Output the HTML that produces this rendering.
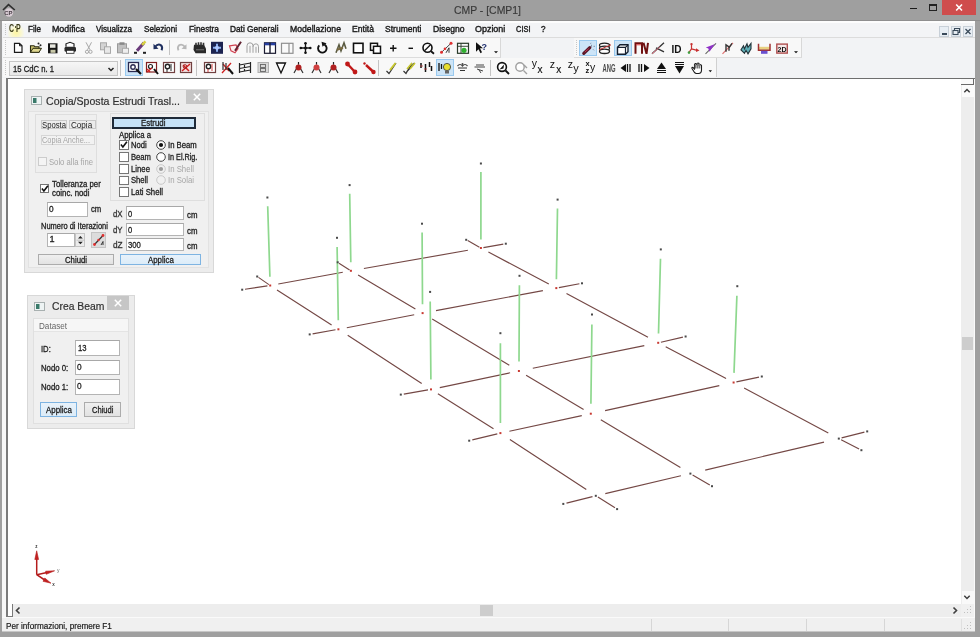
<!DOCTYPE html>
<html><head><meta charset="utf-8"><style>
#w{position:absolute;left:0;top:0;width:980px;height:637px;will-change:transform;overflow:hidden;}
html,body{margin:0;padding:0;}
body{width:980px;height:637px;position:relative;overflow:hidden;font-family:"Liberation Sans",sans-serif;background:#9f9f9f;}
.r{position:absolute;}
.t{position:absolute;white-space:nowrap;transform-origin:0 0;font-family:"Liberation Sans",sans-serif;}
</style></head><body><div id="w">
<div class="r" style="left:0px;top:0px;width:980px;height:637px;background:#9f9f9f"></div>
<svg class="r" style="left:1px;top:2px" width="16" height="16" viewBox="0 0 16 16">
<circle cx="8" cy="10.5" r="4.2" fill="#d8ccd4"/>
<path d="M2 8 L7.5 2.6 L13.8 8" fill="none" stroke="#2e2e2e" stroke-width="1.6"/>
<text x="3.2" y="13.2" font-size="6" font-family="Liberation Sans" font-weight="bold" fill="#4a4048">CP</text>
</svg>
<div class="t" style="left:454.00px;top:4.58px;font-size:11.01px;line-height:11.01px;color:#383838;font-weight:normal;transform:scaleX(0.9468);-webkit-text-stroke:0.15px #383838;">CMP - [CMP1]</div>
<div class="r" style="left:910px;top:7.8px;width:7px;height:1.6px;background:#1a1a1a"></div>
<div class="r" style="left:929px;top:4px;width:8px;height:7px;border:1.5px solid #222;box-sizing:border-box;border-top-width:2.5px"></div>
<div class="r" style="left:942px;top:0px;width:34px;height:15px;background:#cf4d4d"></div>
<svg class="r" style="left:953px;top:3px" width="12" height="10" viewBox="0 0 12 10">
<path d="M3.2 1.5 L9 7.5 M9 1.5 L3.2 7.5" stroke="#fff" stroke-width="1.6"/></svg>
<div class="r" style="left:2px;top:21px;width:973px;height:611px;background:#f0f0f0"></div>
<div class="r" style="left:2px;top:21px;width:973px;height:16px;background:#f3f4f6"></div>
<div class="r" style="left:2px;top:21px;width:973px;height:2px;background:#fdfdfd"></div>
<div class="r" style="left:0px;top:20px;width:980px;height:1px;background:#8f8f8f"></div>
<div class="r" style="left:3px;top:37px;width:972px;height:1px;background:#dcdcdc"></div>
<div class="r" style="left:5px;top:24px;width:1px;height:1px;background:#c4c4c4"></div>
<div class="r" style="left:5px;top:26px;width:1px;height:1px;background:#c4c4c4"></div>
<div class="r" style="left:5px;top:28px;width:1px;height:1px;background:#c4c4c4"></div>
<div class="r" style="left:5px;top:30px;width:1px;height:1px;background:#c4c4c4"></div>
<div class="r" style="left:5px;top:32px;width:1px;height:1px;background:#c4c4c4"></div>
<div class="r" style="left:5px;top:34px;width:1px;height:1px;background:#c4c4c4"></div>
<div class="r" style="left:8px;top:23px;width:16px;height:14px;background:radial-gradient(circle at 50% 70%, #fff6a0 0%, rgba(255,250,180,0.5) 45%, rgba(255,255,255,0) 70%)"></div>
<div class="t" style="left:8.80px;top:23.61px;font-size:10.14px;line-height:10.14px;color:#3c3c18;font-weight:bold;transform:scaleX(0.6927);">C P</div>
<div class="r" style="left:14.6px;top:25.5px;width:1.3px;height:2.5px;background:#5a5a30"></div>
<div class="t" style="left:28.00px;top:24.87px;font-size:9.13px;line-height:9.13px;color:#1a1a1a;font-weight:normal;transform:scaleX(0.8844);-webkit-text-stroke:0.4px #1a1a1a;">File</div>
<div class="t" style="left:52.00px;top:24.87px;font-size:9.13px;line-height:9.13px;color:#1a1a1a;font-weight:normal;transform:scaleX(0.9690);-webkit-text-stroke:0.4px #1a1a1a;">Modifica</div>
<div class="t" style="left:96.00px;top:24.87px;font-size:9.13px;line-height:9.13px;color:#1a1a1a;font-weight:normal;transform:scaleX(0.8781);-webkit-text-stroke:0.4px #1a1a1a;">Visualizza</div>
<div class="t" style="left:144.00px;top:24.87px;font-size:9.13px;line-height:9.13px;color:#1a1a1a;font-weight:normal;transform:scaleX(0.8902);-webkit-text-stroke:0.4px #1a1a1a;">Selezioni</div>
<div class="t" style="left:188.50px;top:24.87px;font-size:9.13px;line-height:9.13px;color:#1a1a1a;font-weight:normal;transform:scaleX(0.9089);-webkit-text-stroke:0.4px #1a1a1a;">Finestra</div>
<div class="t" style="left:230.00px;top:24.87px;font-size:9.13px;line-height:9.13px;color:#1a1a1a;font-weight:normal;transform:scaleX(0.9104);-webkit-text-stroke:0.4px #1a1a1a;">Dati Generali</div>
<div class="t" style="left:289.70px;top:24.87px;font-size:9.13px;line-height:9.13px;color:#1a1a1a;font-weight:normal;transform:scaleX(0.9475);-webkit-text-stroke:0.4px #1a1a1a;">Modellazione</div>
<div class="t" style="left:352.20px;top:24.87px;font-size:9.13px;line-height:9.13px;color:#1a1a1a;font-weight:normal;transform:scaleX(0.9412);-webkit-text-stroke:0.4px #1a1a1a;">Entità</div>
<div class="t" style="left:385.00px;top:24.87px;font-size:9.13px;line-height:9.13px;color:#1a1a1a;font-weight:normal;transform:scaleX(0.9340);-webkit-text-stroke:0.4px #1a1a1a;">Strumenti</div>
<div class="t" style="left:432.60px;top:24.87px;font-size:9.13px;line-height:9.13px;color:#1a1a1a;font-weight:normal;transform:scaleX(0.9401);-webkit-text-stroke:0.4px #1a1a1a;">Disegno</div>
<div class="t" style="left:475.20px;top:24.87px;font-size:9.13px;line-height:9.13px;color:#1a1a1a;font-weight:normal;transform:scaleX(0.9789);-webkit-text-stroke:0.4px #1a1a1a;">Opzioni</div>
<div class="t" style="left:516.00px;top:24.87px;font-size:9.13px;line-height:9.13px;color:#1a1a1a;font-weight:normal;transform:scaleX(0.8165);-webkit-text-stroke:0.4px #1a1a1a;">CISI</div>
<div class="t" style="left:541.00px;top:24.87px;font-size:9.13px;line-height:9.13px;color:#1a1a1a;font-weight:normal;transform:scaleX(0.8880);-webkit-text-stroke:0.4px #1a1a1a;">?</div>
<div class="r" style="left:939px;top:26px;width:10px;height:11px;background:#e8eef4;border:1px solid #c8d0d8;box-sizing:border-box"></div>
<div class="r" style="left:951px;top:26px;width:10px;height:11px;background:#e8eef4;border:1px solid #c8d0d8;box-sizing:border-box"></div>
<div class="r" style="left:963px;top:26px;width:10px;height:11px;background:#e8eef4;border:1px solid #c8d0d8;box-sizing:border-box"></div>
<div class="r" style="left:942px;top:33px;width:5px;height:1.5px;background:#3a4a5a"></div>
<svg class="r" style="left:951px;top:26px" width="10" height="11" viewBox="0 0 10 11">
<rect x="2" y="4.5" width="5" height="4" fill="none" stroke="#3a4a5a" stroke-width="1.1"/>
<path d="M3.5 4.5 V2.5 H8.5 V6.5 H7" fill="none" stroke="#3a4a5a" stroke-width="1.1"/></svg>
<svg class="r" style="left:963px;top:26px" width="10" height="11" viewBox="0 0 10 11">
<path d="M2.5 3 L7.5 8 M7.5 3 L2.5 8" stroke="#3a4a5a" stroke-width="1.3"/></svg>
<div class="r" style="left:2px;top:38px;width:973px;height:40px;background:#f2f3f5"></div>
<div class="r" style="left:3px;top:38px;width:497px;height:19px;background:#f8f8f8;border-right:1px solid #d8d8d8;border-bottom:1px solid #dcdcdc"></div>
<div class="r" style="left:574px;top:38px;width:227px;height:19px;background:#f8f8f8;border-right:1px solid #d8d8d8;border-bottom:1px solid #dcdcdc"></div>
<div class="r" style="left:3px;top:58px;width:713px;height:19px;background:#f8f8f8;border-right:1px solid #d0d0d0"></div>
<div class="r" style="left:5px;top:40px;width:1px;height:1px;background:#c6c6c6"></div>
<div class="r" style="left:5px;top:42px;width:1px;height:1px;background:#c6c6c6"></div>
<div class="r" style="left:5px;top:44px;width:1px;height:1px;background:#c6c6c6"></div>
<div class="r" style="left:5px;top:46px;width:1px;height:1px;background:#c6c6c6"></div>
<div class="r" style="left:5px;top:48px;width:1px;height:1px;background:#c6c6c6"></div>
<div class="r" style="left:5px;top:50px;width:1px;height:1px;background:#c6c6c6"></div>
<div class="r" style="left:5px;top:52px;width:1px;height:1px;background:#c6c6c6"></div>
<div class="r" style="left:5px;top:54px;width:1px;height:1px;background:#c6c6c6"></div>
<div class="r" style="left:576px;top:40px;width:1px;height:1px;background:#c6c6c6"></div>
<div class="r" style="left:576px;top:42px;width:1px;height:1px;background:#c6c6c6"></div>
<div class="r" style="left:576px;top:44px;width:1px;height:1px;background:#c6c6c6"></div>
<div class="r" style="left:576px;top:46px;width:1px;height:1px;background:#c6c6c6"></div>
<div class="r" style="left:576px;top:48px;width:1px;height:1px;background:#c6c6c6"></div>
<div class="r" style="left:576px;top:50px;width:1px;height:1px;background:#c6c6c6"></div>
<div class="r" style="left:576px;top:52px;width:1px;height:1px;background:#c6c6c6"></div>
<div class="r" style="left:576px;top:54px;width:1px;height:1px;background:#c6c6c6"></div>
<div class="r" style="left:5px;top:60px;width:1px;height:1px;background:#c6c6c6"></div>
<div class="r" style="left:5px;top:62px;width:1px;height:1px;background:#c6c6c6"></div>
<div class="r" style="left:5px;top:64px;width:1px;height:1px;background:#c6c6c6"></div>
<div class="r" style="left:5px;top:66px;width:1px;height:1px;background:#c6c6c6"></div>
<div class="r" style="left:5px;top:68px;width:1px;height:1px;background:#c6c6c6"></div>
<div class="r" style="left:5px;top:70px;width:1px;height:1px;background:#c6c6c6"></div>
<div class="r" style="left:5px;top:72px;width:1px;height:1px;background:#c6c6c6"></div>
<div class="r" style="left:5px;top:74px;width:1px;height:1px;background:#c6c6c6"></div>
<div class="r" style="left:578.5px;top:39.5px;width:18px;height:16.5px;background:#cce4f7;border:1px solid #99c9ef;box-sizing:border-box"></div>
<div class="r" style="left:614px;top:39.5px;width:18px;height:16.5px;background:#cce4f7;border:1px solid #99c9ef;box-sizing:border-box"></div>
<div class="r" style="left:124.5px;top:59px;width:18px;height:17px;background:#cce4f7;border:1px solid #99c9ef;box-sizing:border-box"></div>
<div class="r" style="left:436px;top:59px;width:17.5px;height:17px;background:#cce4f7;border:1px solid #99c9ef;box-sizing:border-box"></div>
<div class="r" style="left:169px;top:40px;width:1px;height:15px;background:#c4c4c4"></div>
<div class="r" style="left:120px;top:60px;width:1px;height:16px;background:#c4c4c4"></div>
<div class="r" style="left:196px;top:60px;width:1px;height:16px;background:#c4c4c4"></div>
<div class="r" style="left:378px;top:60px;width:1px;height:16px;background:#c4c4c4"></div>
<div class="r" style="left:490px;top:60px;width:1px;height:16px;background:#c4c4c4"></div>
<div class="r" style="left:9px;top:61px;width:109px;height:15px;background:linear-gradient(#f6f6f6,#e8e8e8);border:1px solid #c6c6c6;box-sizing:border-box"></div>
<div class="t" style="left:13.20px;top:63.78px;font-size:9.71px;line-height:9.71px;color:#1a1a1a;font-weight:normal;transform:scaleX(0.7915);-webkit-text-stroke:0.3px #1a1a1a;">15 CdC n. 1</div>
<svg class="r" style="left:0;top:0" width="980" height="80" viewBox="0 0 980 80"><g transform="translate(0,0.8)"><path d="M14.5 42.5 H19.5 L22 45 V51.5 H14.5 Z" fill="#fff" stroke="#1a1a1a" stroke-width="1.2"/><path d="M19.5 42.5 V45 H22" fill="none" stroke="#1a1a1a" stroke-width="1"/><path d="M30.5 51.5 V45 H34 L35 46 H39 V51.5 Z" fill="#c8c070" stroke="#2a2a10" stroke-width="1.1"/><path d="M30.5 51.5 L33 47.5 H41.5 L39 51.5 Z" fill="#e0d890" stroke="#2a2a10" stroke-width="1"/><circle cx="38.5" cy="42.8" r="1" fill="#222"/><circle cx="40.5" cy="44.5" r="1" fill="#222"/><rect x="48" y="42.5" width="9.5" height="10" fill="#151515"/><rect x="50" y="43.5" width="5.5" height="3.5" fill="#e8e8e0"/><rect x="50.5" y="49" width="5" height="3" fill="#c8c8a8"/><path d="M66 46 V43 L70 41.5 L74 43 V46" fill="#fff" stroke="#222" stroke-width="1.2"/><rect x="64.5" y="46" width="11.5" height="5" rx="1.5" fill="#2a2a2a"/><rect x="66.5" y="49.5" width="7.5" height="3" fill="#fff" stroke="#222" stroke-width="0.8"/><path d="M86 41.5 L90 49 M91.5 41.5 L87.5 49" stroke="#a8a8a8" stroke-width="1"/><circle cx="87" cy="51" r="1.6" fill="none" stroke="#a8a8a8"/><circle cx="90.5" cy="51" r="1.6" fill="none" stroke="#a8a8a8"/><rect x="100.5" y="42" width="6" height="7" fill="#d4d4d4" stroke="#a8a8a8"/><rect x="104.5" y="46" width="6" height="6.5" fill="#e8e8e8" stroke="#a8a8a8"/><rect x="117.5" y="43" width="9" height="9" fill="#c0c0c0" stroke="#9a9a9a"/><rect x="119.5" y="41.5" width="5" height="2.5" fill="#888"/><rect x="122.5" y="47.5" width="6" height="5" fill="#eee" stroke="#aaa"/><path d="M137 50 L144 42" stroke="#6a3a7a" stroke-width="3"/><path d="M142 44 L145.5 40.5" stroke="#d8d040" stroke-width="2.5"/><rect x="134" y="51" width="3" height="2" fill="#222"/><rect x="143" y="51" width="3" height="2" fill="#222"/><path d="M155 46 Q158 42.5 161 44.5 Q163 46.5 161.5 49.5" fill="none" stroke="#203060" stroke-width="2"/><path d="M153.5 43 L153.5 48.5 L158.5 48 Z" fill="#203060"/><path d="M185 46 Q182 42.5 179 44.5 Q177 46.5 178.5 49.5" fill="none" stroke="#b8b8b8" stroke-width="1.8"/><path d="M186.5 43.5 L186.5 48.5 L181.5 48 Z" fill="#b8b8b8"/><path d="M194 44 H204 L206 48 V52.5 H195.5 L193.5 49 Z" fill="#2a2a2a"/><path d="M196 42 V45 M198.5 41.5 V45 M201 41.5 V45 M203.5 42 V45" stroke="#333" stroke-width="1.6"/><path d="M196 49 H204" stroke="#888" stroke-width="0.8"/><rect x="211" y="41" width="12" height="12" fill="#1c2350"/><path d="M217 43 V51 M213 47 H221" stroke="#8ab0f0" stroke-width="2"/><circle cx="217" cy="47" r="2" fill="#b0c8ff"/><path d="M229.5 45 L236 44 L238 48 L235 52 L231 50 Z" fill="#fff0f0" stroke="#d04050" stroke-width="1.2"/><path d="M235 50 L241 41" stroke="#602030" stroke-width="2"/><path d="M247 52 V45 Q247 42 250 42 Q253 42 253 45 V52 M250 52 V45 M253 46 Q253 43 256 43 Q258.5 43 258.5 46 V52 M256 52 V46" fill="none" stroke="#a0a0a0" stroke-width="1"/><rect x="264.5" y="42" width="11" height="10.5" fill="#fff" stroke="#1a1a30" stroke-width="1.2"/><rect x="264.5" y="42" width="11" height="2.5" fill="#2840a0"/><path d="M270 42 V52.5" stroke="#1a1a30" stroke-width="1.4"/><rect x="281.5" y="42.5" width="11.5" height="10" fill="#fafafa" stroke="#909090" stroke-width="1.2"/><path d="M289 42.5 V52.5" stroke="#909090" stroke-width="1.2"/><path d="M305.5 42.5 V52 M300.8 47.2 H310.3" stroke="#111" stroke-width="1.3"/><circle cx="305.5" cy="47.2" r="1.5" fill="#111"/><circle cx="305.5" cy="42.5" r="1.3" fill="#111"/><circle cx="305.5" cy="52" r="1.3" fill="#111"/><circle cx="300.8" cy="47.2" r="1.3" fill="#111"/><circle cx="310.3" cy="47.2" r="1.3" fill="#111"/><path d="M324.5 43.8 A4.3 4.3 0 1 1 319.3 44.5" fill="none" stroke="#111" stroke-width="1.9"/><path d="M321.5 41 L326.5 42.5 L322.5 46 Z" fill="#111"/><path d="M336 52 L339 44 L341 50 L344 42 L346 48" fill="none" stroke="#5a5a40" stroke-width="1.6"/><path d="M337 49 L343 47" stroke="#7a6a40" stroke-width="2"/><rect x="353.5" y="42.5" width="9.5" height="9.5" fill="#fff" stroke="#111" stroke-width="1.6"/><rect x="370.5" y="42.5" width="7" height="7" fill="#fff" stroke="#111" stroke-width="1.5"/><rect x="373.5" y="45.5" width="7" height="7" fill="#fff" stroke="#111" stroke-width="1.5"/><path d="M390 47.5 H396.5 M393.2 44.2 V50.8" stroke="#111" stroke-width="1.4"/><path d="M408.5 47.5 H413" stroke="#111" stroke-width="1.4"/><circle cx="427.5" cy="47" r="4.5" fill="#fff" stroke="#111" stroke-width="1.6"/><path d="M424.5 50 L430.5 44" stroke="#111" stroke-width="1.3"/><path d="M431 50.5 L434 53" stroke="#111" stroke-width="1.8"/><path d="M441.5 51.5 L451 42.5" stroke="#444" stroke-width="1"/><circle cx="441.5" cy="51.5" r="1.5" fill="#e03030"/><circle cx="445" cy="48" r="1.3" fill="#e03030"/><circle cx="451" cy="42.5" r="1.5" fill="#e03030"/><path d="M446 52 L449 47 L449 52" fill="none" stroke="#333" stroke-width="1"/><rect x="457.5" y="42.5" width="11" height="10" fill="#fafafa" stroke="#2a3a2a" stroke-width="1.2"/><path d="M457.5 45.5 H468.5 M461 42.5 V52.5" stroke="#2a3a2a" stroke-width="0.9"/><circle cx="464" cy="49.5" r="2.6" fill="#30b030"/><path d="M476 41.5 V51 L478.5 48.5 L480.5 52.5 L482 51.5 L480 47.5 L483 47.5 Z" fill="#111"/><text x="481.5" y="49" font-size="9" font-weight="bold" font-family="Liberation Sans" fill="#203070">?</text><path d="M494 50.5 H498 L496 52.5 Z" fill="#111"/><path d="M583.8 52.5 L589.8 46.8" stroke="#5a1828" stroke-width="3.2" stroke-linecap="round"/><path d="M584.8 51.3 L588.8 47.8" stroke="#c03050" stroke-width="1"/><path d="M591.5 44 V46 M593.5 45.5 H595 M593 48.5 L594 49.5 M590.5 43 L591 42" stroke="#7a8aa0" stroke-width="0.9"/><ellipse cx="604.5" cy="44.5" rx="5" ry="2.2" fill="#fff" stroke="#222" stroke-width="1.3"/><ellipse cx="604.5" cy="47.5" rx="5" ry="2.2" fill="#fff" stroke="#222" stroke-width="1.3"/><ellipse cx="604.5" cy="50.5" rx="5" ry="2.2" fill="#fff" stroke="#222" stroke-width="1.3"/><path d="M599 49 L611 44" stroke="#c03030" stroke-width="1"/><path d="M617.5 46.5 L620 44 H628 V51 L625.5 53.5 H617.5 Z" fill="#fff" stroke="#152030" stroke-width="1.4"/><path d="M617.5 46.5 H625.5 V53.5 M625.5 46.5 L628 44" fill="none" stroke="#152030" stroke-width="1.2"/><path d="M635.5 53 V42.5 H642 V53 M643.5 42 L646.5 53 L648 42" fill="none" stroke="#701010" stroke-width="2"/><path d="M636 44 H641" stroke="#e04040" stroke-width="1"/><path d="M652 53 L664 42 M656 47 L664 51" stroke="#333" stroke-width="1.3"/><path d="M652 53 L660 46" stroke="#e07080" stroke-width="1"/><text x="671.5" y="51.8" font-size="10" font-weight="bold" font-family="Liberation Sans" fill="#111">ID</text><path d="M691.5 48 L697 49.5 M691.5 48 L691.5 43.5 M691.5 48 L689 51.5" stroke="#c83030" stroke-width="1.2"/><circle cx="691.5" cy="43.3" r="1.2" fill="#c83030"/><circle cx="689" cy="51.8" r="1.3" fill="#40a040"/><path d="M696 47.5 L699.5 49.7 L696 51.2 Z" fill="#c83030"/><path d="M705.5 53 L716 42.5" stroke="#666" stroke-width="1.1"/><path d="M714.5 43.5 L709.5 51 L708.3 47.8 L705.8 46.8 Z" fill="#9030c8"/><path d="M722.5 53 L733 42" stroke="#e07070" stroke-width="1.2"/><path d="M726 51 V44 L729 46 V50 M729 47 L732 42.5" fill="none" stroke="#333" stroke-width="1.4"/><path d="M741 49 L743.5 45 L744.5 48 L747 43 L748 46.5 L751 42.5 V48 L748 53 L746 49.5 L744.5 52.5 Z" fill="#60b0b8" stroke="#22333a" stroke-width="1.1"/><rect x="758.5" y="46" width="11.5" height="3" fill="#e8d080"/><path d="M758.5 43 V49.5 H770 V43" fill="none" stroke="#a03030" stroke-width="1.5"/><rect x="761" y="50" width="6.5" height="3" fill="#6a50d0"/><rect x="776.8" y="43.3" width="10.5" height="9" fill="#f6e8e8" stroke="#b05050" stroke-width="1.4"/><text x="777.6" y="50.8" font-size="7.5" font-weight="bold" font-family="Liberation Sans" fill="#111" textLength="9" lengthAdjust="spacingAndGlyphs">2D</text><path d="M794 50.5 H798 L796 52.5 Z" fill="#111"/></g><path d="M108.5 68 L111 70.5 L113.5 68" fill="none" stroke="#222" stroke-width="1.5"/><rect x="128.5" y="62.5" width="10" height="9" fill="#fff" stroke="#2a2a50" stroke-width="1.3"/><circle cx="133" cy="67" r="2.2" fill="none" stroke="#2a2a50" stroke-width="1.4"/><path d="M136 69 L141 74" stroke="#111" stroke-width="2.2"/><rect x="146.5" y="62.5" width="10" height="9.5" fill="#fff" stroke="#802020" stroke-width="1.2"/><circle cx="150.5" cy="66.5" r="2" fill="none" stroke="#222" stroke-width="1.2"/><path d="M147 72 L152 68 M150 72 L147 69" stroke="#d02020" stroke-width="1.3"/><path d="M154 69 L158 74" stroke="#111" stroke-width="2"/><rect x="163.5" y="62.5" width="11" height="10" fill="#fff" stroke="#704040" stroke-width="1.2"/><circle cx="167.5" cy="66.5" r="2.2" fill="none" stroke="#222" stroke-width="1.4"/><path d="M167 72 V69 M171 64 V71" stroke="#222" stroke-width="1"/><rect x="180.5" y="62.5" width="11" height="10" fill="#f4e0e0" stroke="#704040" stroke-width="1.2"/><path d="M182 71 L190 64 M183 65 L189 71" stroke="#d02020" stroke-width="1.5"/><circle cx="185" cy="66.5" r="1.8" fill="none" stroke="#a02020" stroke-width="1"/><rect x="204.5" y="62.5" width="11" height="10" fill="#fff" stroke="#704040" stroke-width="1.2"/><circle cx="208.5" cy="66.5" r="2.2" fill="none" stroke="#222" stroke-width="1.4"/><path d="M208 72 V69 M212 64 V71" stroke="#d04040" stroke-width="1"/><path d="M222 73 L231 63 M223 64 L229 71" stroke="#d02020" stroke-width="1.3"/><path d="M223 62 V70 M226 63 V70" stroke="#333" stroke-width="1.2"/><path d="M228 68 L233 74" stroke="#111" stroke-width="2"/><path d="M239.5 63 V73 M250.5 62 V73 M239.5 65 L250.5 63 M239.5 68.5 L250.5 66.5 M239.5 72 L250.5 70 M244.5 64 V72" fill="none" stroke="#222" stroke-width="1.2"/><rect x="258" y="62.5" width="10.5" height="10" fill="#d8d8d8" stroke="#b0b0b0"/><rect x="260.5" y="64.5" width="5" height="3" fill="none" stroke="#666" stroke-width="0.9"/><rect x="260.5" y="68.5" width="5" height="3" fill="none" stroke="#666" stroke-width="0.9"/><path d="M276.5 63 H285.5 L281 73 Z" fill="#fff" stroke="#111" stroke-width="1.3"/><path d="M298.5 62 L298.5 64" stroke="#222" stroke-width="1.2"/><path d="M294 73 L298.5 65 L303 73" fill="none" stroke="#333" stroke-width="1.2"/><circle cx="298.5" cy="67.5" r="3" fill="#b02020"/><path d="M316.5 62 L316.5 64" stroke="#222" stroke-width="1.2"/><path d="M312 73 L316.5 65 L321 73" fill="none" stroke="#333" stroke-width="1.2"/><circle cx="316.5" cy="67.5" r="3" fill="#d04040"/><path d="M333.5 62 L333.5 64" stroke="#222" stroke-width="1.2"/><path d="M329 73 L333.5 65 L338 73" fill="none" stroke="#333" stroke-width="1.2"/><circle cx="333.5" cy="67.5" r="3" fill="#b02020"/><path d="M347.5 64 L355 72" stroke="#c01818" stroke-width="2.4"/><circle cx="347.5" cy="64" r="2.4" fill="#c01818"/><circle cx="355" cy="72" r="2.4" fill="#c01818"/><path d="M366 65 L373.5 72" stroke="#c01818" stroke-width="2.4"/><circle cx="364.5" cy="63.5" r="1.2" fill="#c01818"/><circle cx="373.5" cy="72" r="2.2" fill="#c01818"/><path d="M386.5 71 L389 73.5 L396 63" fill="none" stroke="#333" stroke-width="1.2"/><path d="M390 70 L395.5 63" stroke="#c8c830" stroke-width="2"/><path d="M403.5 71 L406 73.5 L412 63 M406.5 72 L414.5 63" fill="none" stroke="#333" stroke-width="1.2"/><path d="M407 69 L412 63 M410 69 L415 63" stroke="#c8c830" stroke-width="1.6"/><path d="M421 63 V68 M425.5 64 V72 M429.5 62 V67 M431.5 66 V71" stroke="#111" stroke-width="1.5"/><path d="M420 66 H423 M424 69 H427" stroke="#c04040" stroke-width="0.8"/><path d="M439 63 V71 M441.5 64 V69" stroke="#111" stroke-width="1.3"/><circle cx="447" cy="67" r="3.6" fill="#e8e030" stroke="#333" stroke-width="0.8"/><rect x="445" y="70.5" width="4" height="3" fill="#666"/><path d="M457.5 66 Q460 63 462.5 66 Q465 63 467.5 66" fill="none" stroke="#444" stroke-width="1.2"/><path d="M458 68 H467 M460 70.5 H465" stroke="#333" stroke-width="1"/><circle cx="462.5" cy="64" r="1" fill="#444"/><path d="M474.5 67 H485 M476 65 H484 M477 69 L483 71 M479 70 L481 73" stroke="#444" stroke-width="1"/><circle cx="502" cy="67" r="4.4" fill="#fff" stroke="#111" stroke-width="1.6"/><path d="M499.5 69.5 L504 64.5 L503.5 68.5 Z" fill="#111"/><path d="M505.5 70.5 L509 74" stroke="#111" stroke-width="1.8"/><circle cx="520" cy="67" r="4.2" fill="#fff" stroke="#a0a0a0" stroke-width="1.4"/><path d="M523.5 70.5 L527 74 M524 65 L527 68" stroke="#a0a0a0" stroke-width="1.4"/><text x="531.8" y="67.2" font-size="10.5" font-family="Liberation Sans" fill="#111">y</text><text x="537.5" y="72.6" font-size="10" font-family="Liberation Sans" fill="#111" stroke="#111" stroke-width="0.15">x</text><text x="549.8" y="67.6" font-size="10.5" font-family="Liberation Sans" fill="#111">z</text><text x="556.3" y="72.6" font-size="10" font-family="Liberation Sans" fill="#111" stroke="#111" stroke-width="0.15">x</text><text x="567.8" y="67.6" font-size="10.5" font-family="Liberation Sans" fill="#111">z</text><text x="573.3" y="71.5" font-size="11" font-family="Liberation Sans" fill="#111">y</text><text x="585.5" y="66.2" font-size="7.5" font-weight="bold" font-family="Liberation Sans" fill="#111">x</text><text x="585.5" y="72.5" font-size="7.5" font-weight="bold" font-family="Liberation Sans" fill="#111">z</text><text x="590" y="70.5" font-size="10.5" font-family="Liberation Sans" fill="#111">y</text><text x="602.5" y="72" font-size="10" font-weight="bold" font-family="Liberation Sans" fill="#4a4a4a" textLength="13" lengthAdjust="spacingAndGlyphs">ANG</text><path d="M620.5 68 L626 64 V72 Z" fill="#111"/><path d="M627.5 64 V72 M630 64 V72" stroke="#111" stroke-width="1.3"/><path d="M649.5 68 L644 64 V72 Z" fill="#111"/><path d="M639 64 V72 M641.5 64 V72" stroke="#111" stroke-width="1.3"/><path d="M661.5 62.5 L666 69 H657 Z" fill="#111"/><path d="M657 70.5 H666 M657 72.5 H666" stroke="#111" stroke-width="1"/><path d="M675 62.5 H684 M675 64.5 H684" stroke="#111" stroke-width="1"/><path d="M675 66 H684 L679.5 73.5 Z" fill="#111"/><path d="M694.5 72.5 L692 68.5 Q691.5 67 693 67.5 L694.5 69 V64.5 Q695.5 63 696.5 64 V65 Q697.5 62.3 699 63.5 V65 Q700.5 64 701.5 65.5 V70 Q701.5 73.5 698.5 73.5 H696 Z" fill="#fff" stroke="#1a1a1a" stroke-width="1.1"/><path d="M695.5 64.5 V68.5 M697.5 63.5 V68.5 M699.5 64 V68.5" stroke="#777" stroke-width="1.6"/><path d="M708.6 70.3 H712 L710.3 72.3 Z" fill="#111"/></svg>
<div class="r" style="left:2px;top:78px;width:4px;height:553px;background:#f7f7f7"></div>
<div class="r" style="left:6px;top:78px;width:969px;height:1px;background:#6e6e6e"></div>
<div class="r" style="left:6px;top:78px;width:2px;height:526px;background:#7a7a7a"></div>
<div class="r" style="left:8px;top:79px;width:953px;height:525px;background:#fff"></div>
<div class="r" style="left:961px;top:79px;width:13px;height:525px;background:#ededed"></div>
<div class="r" style="left:961.5px;top:84px;width:12px;height:13px;background:#fbfbfb"></div>
<div class="r" style="left:961.5px;top:591px;width:12px;height:13px;background:#f9f9f9"></div>
<div class="r" style="left:974px;top:79px;width:1px;height:552px;background:#fafafa"></div>
<div class="r" style="left:961px;top:79px;width:12.5px;height:6px;border:1.5px solid #6a6a6a;border-top:none;border-left:none;box-sizing:border-box;background:#fafafa"></div>
<svg class="r" style="left:962px;top:87px" width="10" height="8" viewBox="0 0 10 8">
<path d="M2.3 5.3 L5 2.6 L7.7 5.3" fill="none" stroke="#3a3a3a" stroke-width="1.4"/></svg>
<svg class="r" style="left:962px;top:593px" width="10" height="8" viewBox="0 0 10 8">
<path d="M2.3 2.7 L5 5.4 L7.7 2.7" fill="none" stroke="#3a3a3a" stroke-width="1.4"/></svg>
<div class="r" style="left:961.5px;top:337.4px;width:11.3px;height:13px;background:#cdcdcd"></div>
<div class="r" style="left:8px;top:604px;width:953px;height:13px;background:#ededed"></div>
<div class="r" style="left:480px;top:605px;width:13px;height:11px;background:#cdcdcd"></div>
<svg class="r" style="left:14px;top:606px" width="8" height="9" viewBox="0 0 8 9">
<path d="M5.5 1.5 L2.5 4.5 L5.5 7.5" fill="none" stroke="#404040" stroke-width="1.6"/></svg>
<svg class="r" style="left:951px;top:606px" width="8" height="9" viewBox="0 0 8 9">
<path d="M2.5 1.5 L5.5 4.5 L2.5 7.5" fill="none" stroke="#404040" stroke-width="1.6"/></svg>
<div class="r" style="left:961px;top:604px;width:13px;height:13px;background:#f0f0f0"></div>
<div class="r" style="left:6px;top:604px;width:7px;height:12.5px;border:2px solid #7a7a7a;border-right-width:1.5px;border-bottom-width:1.5px;border-top:none;box-sizing:border-box;background:#fff"></div>
<div class="r" style="left:2px;top:617px;width:973px;height:1px;background:#fafafa"></div>
<div class="r" style="left:2px;top:618px;width:973px;height:13px;background:#f0f0f0"></div>
<div class="r" style="left:2px;top:631px;width:973px;height:1px;background:#c6c6c6"></div>
<div class="t" style="left:6.40px;top:621.54px;font-size:8.70px;line-height:8.70px;color:#1a1a1a;font-weight:normal;transform:scaleX(0.9413);-webkit-text-stroke:0.2px #1a1a1a;">Per informazioni, premere F1</div>
<div class="r" style="left:651px;top:619px;width:1px;height:12px;background:#d6d6d6"></div>
<div class="r" style="left:728px;top:619px;width:1px;height:12px;background:#d6d6d6"></div>
<div class="r" style="left:806px;top:619px;width:1px;height:12px;background:#d6d6d6"></div>
<div class="r" style="left:884px;top:619px;width:1px;height:12px;background:#d6d6d6"></div>
<div class="r" style="left:961px;top:619px;width:1px;height:12px;background:#e0e0e0"></div>
<svg class="r" style="left:962px;top:604px" width="11" height="11" viewBox="0 0 11 11"><g fill="#c0c0c0"><rect x="8" y="8" width="1" height="1"/><rect x="5" y="8" width="1" height="1"/><rect x="8" y="5" width="1" height="1"/><rect x="2" y="8" width="1" height="1"/><rect x="8" y="2" width="1" height="1"/><rect x="5" y="5" width="1" height="1"/></g></svg>
<svg class="r" style="left:962px;top:620px" width="11" height="11" viewBox="0 0 11 11"><g fill="#c0c0c0"><rect x="8" y="8" width="1" height="1"/><rect x="5" y="8" width="1" height="1"/><rect x="8" y="5" width="1" height="1"/><rect x="2" y="8" width="1" height="1"/><rect x="8" y="2" width="1" height="1"/><rect x="5" y="5" width="1" height="1"/></g></svg>
<svg class="r" style="left:0;top:0" width="980" height="637" viewBox="0 0 980 637">
<path d="M277.0 289.9L331.6 324.9M347.7 335.3L421.7 383.4M437.9 393.8L493.5 428.7M509.9 439.4L586.3 489.5M358.1 275.0L415.4 308.9M432.2 318.9L509.3 365.2M526.1 375.3L583.6 409.4M600.8 419.7L680.4 467.6M488.4 252.0L548.8 284.1M566.5 293.6L648.0 337.3M665.7 346.8L726.1 378.5M744.1 388.1L828.3 433.0M278.3 284.0L342.8 272.3M363.9 268.5L467.9 250.3M245.0 289.3L267.4 285.9M483.4 247.6L503.3 244.1M346.8 327.7L414.2 314.7M436.0 310.6L542.9 290.6M312.6 333.9L335.5 329.8M558.9 287.6L579.4 283.8M439.8 387.6L510.1 372.8M532.8 368.2L644.3 345.6M403.8 394.1L428.0 389.9M660.9 342.2L682.9 337.1M509.4 431.2L581.8 415.6M605.1 410.6L719.3 385.6M472.3 439.9L497.3 433.9M736.4 381.9L759.0 377.1M605.3 493.6L680.9 475.8M705.2 470.1L824.0 442.1M566.5 503.1L592.5 496.6M841.6 437.9L864.4 432.1M258.5 277.4L268.9 284.6M597.9 497.1L615.0 507.8M339.0 263.2L349.6 269.9M692.6 474.9L709.8 484.9M467.7 240.6L479.4 247.2M841.1 439.8L859.1 449.0" stroke="#744845" stroke-width="1.15" fill="none"/>
<path d="M267.7 206.3L269.9 276.7M349.7 193.7L350.8 262.2M480.9 171.9L480.9 239.6M337.1 247.0L338.3 320.2M422.1 232.6L422.5 304.2M557.5 208.4L556.4 279.2M430.2 301.6L430.9 379.6M519.4 285.3L519.0 361.5M660.5 258.7L658.5 333.5M500.4 343.2L500.4 423.1M591.9 324.4L590.9 403.8M736.9 295.8L734.0 372.9" stroke="#8ed88e" stroke-width="1.7" fill="none"/>
<rect x="269.2" y="284.5" width="2" height="2" fill="#c83a32"/>
<rect x="337.4" y="328.3" width="2" height="2" fill="#c83a32"/>
<rect x="430.0" y="388.4" width="2" height="2" fill="#c83a32"/>
<rect x="499.4" y="432.1" width="2" height="2" fill="#c83a32"/>
<rect x="594.8" y="494.8" width="2" height="2" fill="#4a4a4a"/>
<rect x="349.9" y="269.8" width="2" height="2" fill="#c83a32"/>
<rect x="421.6" y="312.1" width="2" height="2" fill="#c83a32"/>
<rect x="517.9" y="370.0" width="2" height="2" fill="#c83a32"/>
<rect x="589.8" y="412.7" width="2" height="2" fill="#c83a32"/>
<rect x="689.4" y="472.6" width="2" height="2" fill="#4a4a4a"/>
<rect x="479.9" y="247.0" width="2" height="2" fill="#c83a32"/>
<rect x="555.3" y="287.1" width="2" height="2" fill="#c83a32"/>
<rect x="657.2" y="341.8" width="2" height="2" fill="#c83a32"/>
<rect x="732.6" y="381.5" width="2" height="2" fill="#c83a32"/>
<rect x="837.8" y="437.6" width="2" height="2" fill="#4a4a4a"/>
<rect x="241.2" y="288.7" width="2" height="2" fill="#4a4a4a"/>
<rect x="308.7" y="333.4" width="2" height="2" fill="#4a4a4a"/>
<rect x="399.8" y="393.6" width="2" height="2" fill="#4a4a4a"/>
<rect x="468.2" y="439.7" width="2" height="2" fill="#4a4a4a"/>
<rect x="562.3" y="502.9" width="2" height="2" fill="#4a4a4a"/>
<rect x="504.8" y="242.7" width="2" height="2" fill="#4a4a4a"/>
<rect x="581.0" y="282.3" width="2" height="2" fill="#4a4a4a"/>
<rect x="684.6" y="335.5" width="2" height="2" fill="#4a4a4a"/>
<rect x="760.8" y="375.5" width="2" height="2" fill="#4a4a4a"/>
<rect x="866.2" y="430.4" width="2" height="2" fill="#4a4a4a"/>
<rect x="256.2" y="275.5" width="2" height="2" fill="#4a4a4a"/>
<rect x="336.7" y="261.3" width="2" height="2" fill="#4a4a4a"/>
<rect x="465.2" y="238.8" width="2" height="2" fill="#4a4a4a"/>
<rect x="616.1" y="508.1" width="2" height="2" fill="#4a4a4a"/>
<rect x="711.0" y="485.2" width="2" height="2" fill="#4a4a4a"/>
<rect x="860.4" y="449.2" width="2" height="2" fill="#4a4a4a"/>
<rect x="266.4" y="196.5" width="2" height="2" fill="#4a4a4a"/>
<rect x="348.6" y="184.1" width="2" height="2" fill="#4a4a4a"/>
<rect x="479.9" y="162.5" width="2" height="2" fill="#4a4a4a"/>
<rect x="336.0" y="236.8" width="2" height="2" fill="#4a4a4a"/>
<rect x="421.0" y="222.7" width="2" height="2" fill="#4a4a4a"/>
<rect x="556.6" y="198.6" width="2" height="2" fill="#4a4a4a"/>
<rect x="429.1" y="290.9" width="2" height="2" fill="#4a4a4a"/>
<rect x="518.5" y="274.8" width="2" height="2" fill="#4a4a4a"/>
<rect x="659.8" y="248.4" width="2" height="2" fill="#4a4a4a"/>
<rect x="499.4" y="332.2" width="2" height="2" fill="#4a4a4a"/>
<rect x="591.0" y="313.5" width="2" height="2" fill="#4a4a4a"/>
<rect x="736.3" y="285.2" width="2" height="2" fill="#4a4a4a"/>
<g stroke="#b41c1c" stroke-width="1.5" fill="#c42020">
<path d="M36.7 574.7 V557" fill="none"/>
<path d="M36.7 550.8 L38.6 559.5 L34.8 559.5 Z" stroke-width="0.6"/>
<path d="M36.7 574.7 L47 572.5" fill="none"/>
<path d="M54.6 570.8 L46.2 574.3 L45.6 571.2 Z" stroke-width="0.6"/>
<path d="M36.7 574.7 L44 579.5" fill="none"/>
<path d="M51 583.2 L43 581.3 L44.8 578 Z" stroke-width="0.6"/>
</g>
<text x="35.3" y="547.8" font-size="4.5" font-family="Liberation Sans" font-weight="bold" fill="#333">z</text>
<text x="57" y="572" font-size="5" font-family="Liberation Sans" fill="#666">y</text>
<text x="52.3" y="586.3" font-size="4.5" font-family="Liberation Sans" font-weight="bold" fill="#444">x</text>
</svg>
<div class="r" style="left:23.5px;top:88.5px;width:190px;height:184px;background:#ececec;border:1px solid #d8d8d8;box-sizing:border-box"></div>
<svg class="r" style="left:31px;top:96px" width="11" height="9" viewBox="0 0 11 9"><rect x="0.5" y="0.5" width="10" height="8" fill="#eef4f4" stroke="#a8b0b0"/><rect x="2" y="2" width="3.5" height="5" fill="#3a7a6a"/></svg>
<div class="t" style="left:46.00px;top:95.75px;font-size:11.16px;line-height:11.16px;color:#303030;font-weight:normal;transform:scaleX(0.9474);-webkit-text-stroke:0.2px #303030;">Copia/Sposta Estrudi Trasl...</div>
<div class="r" style="left:186px;top:90px;width:22px;height:14px;background:#c6c6c6"></div><svg class="r" style="left:186px;top:90px" width="22" height="14" viewBox="0 0 22 14"><path d="M7.8 3.8 L14.2 10.2 M14.2 3.8 L7.8 10.2" stroke="#fff" stroke-width="1.5"/></svg>
<div class="r" style="left:28px;top:111px;width:181px;height:157px;background:#f0f0f0;border:1px solid #e2e2e2;box-sizing:border-box"></div>
<div class="r" style="left:35px;top:114px;width:62px;height:59px;border:1px solid #dedede;box-sizing:border-box;background:#efefef"></div>
<div class="r" style="left:41px;top:120px;width:26px;height:9px;background:#ececec;border:1px solid #c8c8c8;box-sizing:border-box"></div>
<div class="r" style="left:69px;top:120px;width:26.5px;height:9px;background:#ececec;border:1px solid #c8c8c8;box-sizing:border-box"></div>
<div class="t" style="left:42.00px;top:120.94px;font-size:8.70px;line-height:8.70px;color:#1c1c1c;font-weight:normal;transform:scaleX(0.8860);">Sposta</div>
<div class="t" style="left:71.00px;top:120.94px;font-size:8.70px;line-height:8.70px;color:#1c1c1c;font-weight:normal;transform:scaleX(0.9323);">Copia</div>
<div class="r" style="left:41px;top:134.5px;width:54px;height:10px;background:#f2f2f2;border:1px solid #d6d6d6;box-sizing:border-box"></div>
<div class="t" style="left:42.00px;top:135.75px;font-size:9.28px;line-height:9.28px;color:#a6a6a6;font-weight:normal;transform:scaleX(0.7955);">Copia Anche...</div>
<div class="r" style="left:37.8px;top:157.3px;width:9px;height:9px;background:#f4f4f4;border:1px solid #cccccc;box-sizing:border-box"></div>
<div class="t" style="left:49.00px;top:157.84px;font-size:8.70px;line-height:8.70px;color:#a6a6a6;font-weight:normal;transform:scaleX(0.8838);">Solo alla fine</div>
<div class="r" style="left:109.5px;top:113px;width:95.5px;height:88px;border:1px solid #dedede;box-sizing:border-box;background:#efefef"></div>
<div class="r" style="left:112px;top:117px;width:83.5px;height:12px;background:#c6e2f7;border:2px solid #1e2a38;box-sizing:border-box"></div>
<div class="t" style="left:140.50px;top:119.34px;font-size:8.70px;line-height:8.70px;color:#1c1c1c;font-weight:normal;transform:scaleX(0.9059);-webkit-text-stroke:0.3px currentColor;">Estrudi</div>
<div class="t" style="left:119.00px;top:131.28px;font-size:8.41px;line-height:8.41px;color:#1c1c1c;font-weight:normal;transform:scaleX(0.9240);-webkit-text-stroke:0.3px currentColor;">Applica a</div>
<div class="r" style="left:119px;top:140.4px;width:9.5px;height:9.5px;background:#fff;border:1px solid #767676;box-sizing:border-box"></div><svg class="r" style="left:119px;top:140.4px" width="9.5" height="9.5" viewBox="0 0 10 10"><path d="M2 4.8 L4.1 7.3 L8.3 1.8" fill="none" stroke="#111" stroke-width="1.7"/></svg>
<div class="t" style="left:130.90px;top:141.12px;font-size:8.84px;line-height:8.84px;color:#1c1c1c;font-weight:normal;transform:scaleX(0.8697);-webkit-text-stroke:0.3px currentColor;">Nodi</div>
<svg class="r" style="left:156px;top:140.20000000000002px" width="10" height="10" viewBox="0 0 10 10"><circle cx="5" cy="5" r="4.3" fill="#fff" stroke="#444" stroke-width="1"/><circle cx="5" cy="5" r="2.1" fill="#111"/></svg>
<div class="t" style="left:168.20px;top:141.12px;font-size:8.84px;line-height:8.84px;color:#1c1c1c;font-weight:normal;transform:scaleX(0.8746);-webkit-text-stroke:0.3px currentColor;">In Beam</div>
<div class="r" style="left:119px;top:152.3px;width:9.5px;height:9.5px;background:#fff;border:1px solid #767676;box-sizing:border-box"></div>
<div class="t" style="left:130.90px;top:153.02px;font-size:8.84px;line-height:8.84px;color:#1c1c1c;font-weight:normal;transform:scaleX(0.8668);-webkit-text-stroke:0.3px currentColor;">Beam</div>
<svg class="r" style="left:156px;top:152.10000000000002px" width="10" height="10" viewBox="0 0 10 10"><circle cx="5" cy="5" r="4.3" fill="#fff" stroke="#444" stroke-width="1"/></svg>
<div class="t" style="left:168.20px;top:153.02px;font-size:8.84px;line-height:8.84px;color:#1c1c1c;font-weight:normal;transform:scaleX(0.8201);-webkit-text-stroke:0.3px currentColor;">In El.Rig.</div>
<div class="r" style="left:119px;top:164.2px;width:9.5px;height:9.5px;background:#fff;border:1px solid #767676;box-sizing:border-box"></div>
<div class="t" style="left:130.90px;top:164.92px;font-size:8.84px;line-height:8.84px;color:#1c1c1c;font-weight:normal;transform:scaleX(0.8790);-webkit-text-stroke:0.3px currentColor;">Linee</div>
<svg class="r" style="left:156px;top:164.0px" width="10" height="10" viewBox="0 0 10 10"><circle cx="5" cy="5" r="4.3" fill="#f0f0f0" stroke="#c8c8c8" stroke-width="1"/><circle cx="5" cy="5" r="2.1" fill="#9a9a9a"/></svg>
<div class="t" style="left:168.20px;top:164.92px;font-size:8.84px;line-height:8.84px;color:#a6a6a6;font-weight:normal;transform:scaleX(0.8819);">In Shell</div>
<div class="r" style="left:119px;top:175.5px;width:9.5px;height:9.5px;background:#fff;border:1px solid #767676;box-sizing:border-box"></div>
<div class="t" style="left:130.90px;top:176.22px;font-size:8.84px;line-height:8.84px;color:#1c1c1c;font-weight:normal;transform:scaleX(0.8642);-webkit-text-stroke:0.3px currentColor;">Shell</div>
<svg class="r" style="left:156px;top:175.3px" width="10" height="10" viewBox="0 0 10 10"><circle cx="5" cy="5" r="4.3" fill="#f0f0f0" stroke="#c8c8c8" stroke-width="1"/></svg>
<div class="t" style="left:168.20px;top:176.22px;font-size:8.84px;line-height:8.84px;color:#a6a6a6;font-weight:normal;transform:scaleX(0.8819);">In Solai</div>
<div class="r" style="left:119px;top:187.3px;width:9.5px;height:9.5px;background:#fff;border:1px solid #767676;box-sizing:border-box"></div>
<div class="t" style="left:130.90px;top:188.02px;font-size:8.84px;line-height:8.84px;color:#1c1c1c;font-weight:normal;transform:scaleX(0.8796);-webkit-text-stroke:0.3px currentColor;">Lati Shell</div>
<div class="r" style="left:39.6px;top:183.5px;width:9.5px;height:9.5px;background:#fff;border:1px solid #767676;box-sizing:border-box"></div><svg class="r" style="left:39.6px;top:183.5px" width="9.5" height="9.5" viewBox="0 0 10 10"><path d="M2 4.8 L4.1 7.3 L8.3 1.8" fill="none" stroke="#111" stroke-width="1.7"/></svg>
<div class="t" style="left:51.90px;top:180.44px;font-size:8.70px;line-height:8.70px;color:#1c1c1c;font-weight:normal;transform:scaleX(0.8936);-webkit-text-stroke:0.3px currentColor;">Tolleranza per</div>
<div class="t" style="left:51.90px;top:188.94px;font-size:8.70px;line-height:8.70px;color:#1c1c1c;font-weight:normal;transform:scaleX(0.9022);-webkit-text-stroke:0.3px currentColor;">coinc. nodi</div>
<div class="r" style="left:46.5px;top:201.5px;width:41px;height:15px;background:#fff;border:1px solid #b4b4b4;border-top-color:#a8a8a8;box-sizing:border-box"></div>
<div class="t" style="left:48.70px;top:205.15px;font-size:9.28px;line-height:9.28px;color:#1c1c1c;font-weight:normal;transform:scaleX(0.8936);-webkit-text-stroke:0.3px currentColor;">0</div>
<div class="t" style="left:90.70px;top:204.62px;font-size:8.84px;line-height:8.84px;color:#1c1c1c;font-weight:normal;transform:scaleX(0.8727);-webkit-text-stroke:0.3px currentColor;">cm</div>
<div class="t" style="left:41.00px;top:222.24px;font-size:8.70px;line-height:8.70px;color:#1c1c1c;font-weight:normal;transform:scaleX(0.8609);-webkit-text-stroke:0.3px currentColor;">Numero di Iterazioni</div>
<div class="r" style="left:46.5px;top:232.7px;width:28.5px;height:14px;background:#fff;border:1px solid #b4b4b4;border-top-color:#a8a8a8;box-sizing:border-box"></div>
<div class="t" style="left:49.50px;top:235.37px;font-size:9.13px;line-height:9.13px;color:#1c1c1c;font-weight:normal;-webkit-text-stroke:0.3px currentColor;">1</div>
<div class="r" style="left:74.8px;top:232.7px;width:10.7px;height:14px;background:#ececec;border:1px solid #c4c4c4;box-sizing:border-box"></div>
<svg class="r" style="left:74.8px;top:232.7px" width="11" height="14" viewBox="0 0 11 14"><path d="M3 5.5 L5.4 3 L7.8 5.5 Z M3 8.8 L5.4 11.3 L7.8 8.8 Z" fill="#222"/><path d="M1.5 7.2 H9.5" stroke="#bcbcbc" stroke-width="0.8"/></svg>
<div class="r" style="left:91.2px;top:232px;width:15.3px;height:16px;background:#dcdcdc;border:1px solid #c4c4c4;box-sizing:border-box"></div>
<svg class="r" style="left:91.2px;top:232px" width="16" height="16" viewBox="0 0 16 16"><path d="M3.5 12.5 L12 3.5" stroke="#333" stroke-width="1.2"/><circle cx="3.5" cy="12.5" r="1.4" fill="#e03030"/><circle cx="12" cy="3.5" r="1.4" fill="#e03030"/><circle cx="7.5" cy="8" r="1.2" fill="#e03030"/><path d="M10 13 L12 9.5 V13" stroke="#333" stroke-width="1" fill="none"/></svg>
<div class="r" style="left:125.6px;top:206.4px;width:58.8px;height:14px;background:#fff;border:1px solid #b4b4b4;border-top-color:#a8a8a8;box-sizing:border-box"></div>
<div class="t" style="left:113.00px;top:209.69px;font-size:8.99px;line-height:8.99px;color:#333;font-weight:normal;transform:scaleX(0.8722);-webkit-text-stroke:0.3px currentColor;">dX</div>
<div class="t" style="left:128.30px;top:209.82px;font-size:8.84px;line-height:8.84px;color:#1c1c1c;font-weight:normal;transform:scaleX(0.8560);-webkit-text-stroke:0.3px currentColor;">0</div>
<div class="t" style="left:187.10px;top:210.92px;font-size:8.84px;line-height:8.84px;color:#1c1c1c;font-weight:normal;transform:scaleX(0.8897);-webkit-text-stroke:0.3px currentColor;">cm</div>
<div class="r" style="left:125.6px;top:222.5px;width:58.8px;height:13.8px;background:#fff;border:1px solid #b4b4b4;border-top-color:#a8a8a8;box-sizing:border-box"></div>
<div class="t" style="left:113.00px;top:225.59px;font-size:8.99px;line-height:8.99px;color:#333;font-weight:normal;transform:scaleX(0.8722);-webkit-text-stroke:0.3px currentColor;">dY</div>
<div class="t" style="left:128.30px;top:225.72px;font-size:8.84px;line-height:8.84px;color:#1c1c1c;font-weight:normal;transform:scaleX(0.8560);-webkit-text-stroke:0.3px currentColor;">0</div>
<div class="t" style="left:187.10px;top:226.52px;font-size:8.84px;line-height:8.84px;color:#1c1c1c;font-weight:normal;transform:scaleX(0.8897);-webkit-text-stroke:0.3px currentColor;">cm</div>
<div class="r" style="left:125.6px;top:237.9px;width:58.8px;height:13.2px;background:#fff;border:1px solid #b4b4b4;border-top-color:#a8a8a8;box-sizing:border-box"></div>
<div class="t" style="left:113.00px;top:240.99px;font-size:8.99px;line-height:8.99px;color:#333;font-weight:normal;transform:scaleX(0.9171);-webkit-text-stroke:0.3px currentColor;">dZ</div>
<div class="t" style="left:128.30px;top:241.12px;font-size:8.84px;line-height:8.84px;color:#1c1c1c;font-weight:normal;transform:scaleX(0.8738);-webkit-text-stroke:0.3px currentColor;">300</div>
<div class="t" style="left:187.10px;top:242.22px;font-size:8.84px;line-height:8.84px;color:#1c1c1c;font-weight:normal;transform:scaleX(0.8897);-webkit-text-stroke:0.3px currentColor;">cm</div>
<div class="r" style="left:38px;top:254.2px;width:76px;height:10.5px;background:linear-gradient(#f0f0f0,#e2e2e2);border:1px solid #acacac;box-sizing:border-box"></div>
<div class="t" style="left:64.50px;top:256.14px;font-size:8.70px;line-height:8.70px;color:#1c1c1c;font-weight:normal;transform:scaleX(0.8924);-webkit-text-stroke:0.3px currentColor;">Chiudi</div>
<div class="r" style="left:120px;top:254.2px;width:80.7px;height:10.5px;background:linear-gradient(#e8f2fb,#dcecf8);border:1px solid #7eb4e2;box-sizing:border-box"></div>
<div class="t" style="left:147.60px;top:256.27px;font-size:9.13px;line-height:9.13px;color:#1c1c1c;font-weight:normal;transform:scaleX(0.8602);-webkit-text-stroke:0.3px currentColor;">Applica</div>
<div class="r" style="left:27px;top:295px;width:107.8px;height:134px;background:#ececec;border:1px solid #d8d8d8;box-sizing:border-box"></div>
<svg class="r" style="left:34px;top:302px" width="11" height="9" viewBox="0 0 11 9"><rect x="0.5" y="0.5" width="10" height="8" fill="#eef4f4" stroke="#a8b0b0"/><rect x="2" y="2" width="3.5" height="5" fill="#3a7a6a"/></svg>
<div class="t" style="left:51.50px;top:301.01px;font-size:11.45px;line-height:11.45px;color:#303030;font-weight:normal;transform:scaleX(0.9045);-webkit-text-stroke:0.2px #303030;">Crea Beam</div>
<div class="r" style="left:107.2px;top:296px;width:22px;height:14px;background:#c6c6c6"></div><svg class="r" style="left:107.2px;top:296px" width="22" height="14" viewBox="0 0 22 14"><path d="M7.8 3.8 L14.2 10.2 M14.2 3.8 L7.8 10.2" stroke="#fff" stroke-width="1.5"/></svg>
<div class="r" style="left:32.7px;top:317.5px;width:96.1px;height:106px;background:#f0f0f0;border:1px solid #e0e0e0;box-sizing:border-box"></div>
<div class="r" style="left:33.7px;top:318.5px;width:94.1px;height:12.8px;background:#f6f6f6;border-bottom:1px solid #e4e4e4"></div>
<div class="t" style="left:38.50px;top:321.00px;font-size:9.57px;line-height:9.57px;color:#666;font-weight:normal;transform:scaleX(0.8497);">Dataset</div>
<div class="t" style="left:41.20px;top:344.33px;font-size:9.42px;line-height:9.42px;color:#1c1c1c;font-weight:normal;transform:scaleX(0.8127);-webkit-text-stroke:0.3px currentColor;">ID:</div>
<div class="r" style="left:75px;top:340.3px;width:45.1px;height:16px;background:#fff;border:1px solid #b4b4b4;border-top-color:#a8a8a8;box-sizing:border-box"></div>
<div class="t" style="left:77.50px;top:342.78px;font-size:9.71px;line-height:9.71px;color:#1c1c1c;font-weight:normal;transform:scaleX(0.7886);-webkit-text-stroke:0.3px currentColor;">13</div>
<div class="t" style="left:41.40px;top:364.05px;font-size:9.28px;line-height:9.28px;color:#1c1c1c;font-weight:normal;transform:scaleX(0.8397);-webkit-text-stroke:0.3px currentColor;">Nodo 0:</div>
<div class="r" style="left:75.1px;top:359.6px;width:45px;height:15.8px;background:#fff;border:1px solid #b4b4b4;border-top-color:#a8a8a8;box-sizing:border-box"></div>
<div class="t" style="left:77.40px;top:362.75px;font-size:9.28px;line-height:9.28px;color:#1c1c1c;font-weight:normal;transform:scaleX(0.8936);-webkit-text-stroke:0.3px currentColor;">0</div>
<div class="t" style="left:41.40px;top:382.95px;font-size:9.28px;line-height:9.28px;color:#1c1c1c;font-weight:normal;transform:scaleX(0.8397);-webkit-text-stroke:0.3px currentColor;">Nodo 1:</div>
<div class="r" style="left:75.1px;top:378.7px;width:45px;height:16px;background:#fff;border:1px solid #b4b4b4;border-top-color:#a8a8a8;box-sizing:border-box"></div>
<div class="t" style="left:77.40px;top:381.65px;font-size:9.28px;line-height:9.28px;color:#1c1c1c;font-weight:normal;transform:scaleX(0.8936);-webkit-text-stroke:0.3px currentColor;">0</div>
<div class="r" style="left:40.4px;top:401.8px;width:37px;height:15px;background:linear-gradient(#e8f2fb,#dcecf8);border:1px solid #7eb4e2;box-sizing:border-box"></div>
<div class="t" style="left:46.00px;top:405.40px;font-size:9.57px;line-height:9.57px;color:#1c1c1c;font-weight:normal;transform:scaleX(0.8275);-webkit-text-stroke:0.3px currentColor;">Applica</div>
<div class="r" style="left:83.7px;top:401.8px;width:37.1px;height:15px;background:linear-gradient(#f0f0f0,#e2e2e2);border:1px solid #acacac;box-sizing:border-box"></div>
<div class="t" style="left:92.10px;top:405.40px;font-size:9.57px;line-height:9.57px;color:#1c1c1c;font-weight:normal;transform:scaleX(0.7892);-webkit-text-stroke:0.3px currentColor;">Chiudi</div>
</div></body></html>
